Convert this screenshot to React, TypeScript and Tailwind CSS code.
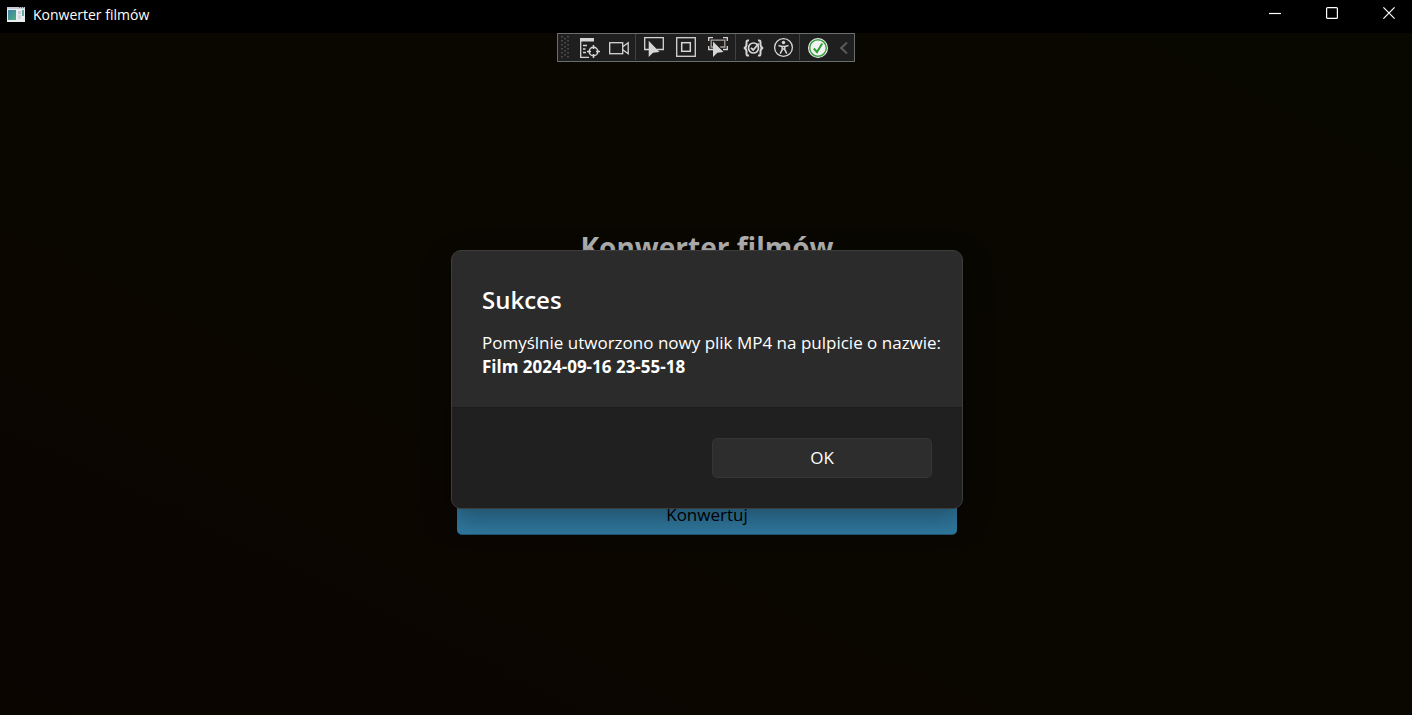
import type { ReactNode } from "react";

function AppIcon() {
  return (
    <svg viewBox="0 0 18 16" className="h-4 w-[18px]" aria-hidden="true">
      <defs>
        <linearGradient id="pane" x1="0" y1="0" x2="1" y2="1">
          <stop offset="0" stopColor="#3f7fae" />
          <stop offset="1" stopColor="#4fae7a" />
        </linearGradient>
      </defs>
      <rect width="18" height="15" fill="#e9edf0" />
      <rect width="18" height="2" fill="#c3cbd6" />
      <rect x="12" y="0" width="1" height="1" fill="#55607a" />
      <rect x="14" y="0" width="1" height="1" fill="#55607a" />
      <rect x="16" y="0" width="1" height="1" fill="#55607a" />
      <rect x="1" y="3" width="8" height="10" fill="url(#pane)" />
      <rect x="11" y="4" width="3" height="3" fill="#c9ced4" />
      <rect x="11" y="8" width="3" height="4" fill="#d4d8dc" />
      <rect x="15" y="3" width="2" height="6" fill="#6aa6a8" />
    </svg>
  );
}

function WindowButton({ label, children }: { label: string; children: ReactNode }) {
  return (
    <button type="button" aria-label={label} className="flex h-[26px] w-[57px] items-center justify-center">
      <svg viewBox="0 0 12 12" className="size-3" fill="none" stroke="#ffffff" strokeWidth="1.2">
        {children}
      </svg>
    </button>
  );
}

function Tool({ label, children }: { label: string; children: ReactNode }) {
  return (
    <button type="button" aria-label={label} className="size-5">
      <svg viewBox="0 0 20 20" className="size-5 overflow-visible" fill="none" stroke="#d6d6d6" strokeWidth="1.3">
        {children}
      </svg>
    </button>
  );
}

function Separator() {
  return <div className="h-[26px] w-px bg-[#424242]" />;
}

const gripRows = [0, 4, 8, 12, 16, 20];

function DebugToolbar() {
  return (
    <div role="toolbar" aria-label="Debug tools" className="flex h-[29px] items-center border border-[#686d6d] bg-[#1f1f1f] pb-px pl-[3px]">
      <svg viewBox="0 0 9 22" className="h-[22px] w-[9px]" fill="#484848" aria-hidden="true">
        {gripRows.map((y) => (
          <g key={y}>
            <rect x="0" y={y} width="2" height="1.5" />
            <rect x="6" y={y} width="2" height="1.5" />
            {y < 20 && <rect x="3" y={y + 2} width="2" height="1.5" />}
          </g>
        ))}
      </svg>
      <div className="flex gap-[9px] pr-[6px] pl-[10px]">
        <Tool label="Live visual tree">
          <rect x="0" y="1" width="14" height="3.500" fill="#d6d6d6" stroke="none" />
          <path d="M.7 4v16.300H9M3 8.500h4M3 12h2.500M3 15.500h3" />
          <circle cx="13.500" cy="14.500" r="4.300" strokeWidth="1.500" />
          <path d="M13.500 8v4M13.500 17v4M7 14.500h4M16 14.500h4" strokeWidth="1.500" />
        </Tool>
        <Tool label="Record">
          <rect x=".7" y="5.700" width="13" height="11" />
          <path d="M13.700 9.700l5.500-4v11l-5.500-4" />
        </Tool>
      </div>
      <Separator />
      <div className="flex gap-3 pr-[7px] pl-2">
        <Tool label="Select element">
          <path d="M5 12.500H.7V.7h18.600v11.800H12.500" />
          <path d="M4.700 3.800v16.200l4.300-4.200 6.500-.8z" fill="#d6d6d6" stroke="none" />
        </Tool>
        <Tool label="Display layout adorners">
          <rect x=".7" y=".7" width="18.600" height="18.600" />
          <rect x="5.700" y="5.700" width="8.600" height="8.600" strokeWidth="1.500" />
        </Tool>
        <Tool label="Track focused element">
          <path d="M.7 4V.7H5M15 .7h4.300V4M.7 9v3.500H5M15 12.500h4.300V9" />
          <path d="M5 10H3.200V3.200h13.600V10h-4.500" stroke="#aaa49c" />
          <path d="M5 4.500v15.500l4.300-4.200 6.200-.8z" fill="#d6d6d6" stroke="none" />
        </Tool>
      </div>
      <Separator />
      <div className="flex gap-[10px] pr-[6px] pl-[7px]">
        <Tool label="Binding failures">
          <path d="M6 3.500C3 3 3.500 5 3.500 7.500c0 2.200-.5 3-2.500 3.500 2 .5 2.500 1.300 2.500 3.500 0 2.500-.5 4.500 2.500 4M15 3.500c3-.5 2.500 1.500 2.500 4 0 2.200.5 3 2.500 3.500-2 .5-2.500 1.300-2.500 3.500 0 2.500.5 4.500-2.500 4" strokeWidth="2" />
          <circle cx="10.500" cy="11" r="5" strokeWidth="1.700" />
          <path d="M8 10.800l2.200 2.200L15.800 6.500" strokeWidth="1.800" />
        </Tool>
        <Tool label="Scan accessibility">
          <circle cx="10.500" cy="10.500" r="8.900" />
          <circle cx="10.500" cy="5.500" r="1.700" fill="#d6d6d6" stroke="none" />
          <path d="M5.500 8.500l3.500 1h3l3.500-1M9.200 9.500v3.200l-2 4M11.800 9.500v3.200l2 4M9 12h3" strokeWidth="1.500" />
        </Tool>
      </div>
      <Separator />
      <div className="flex items-center gap-3 pr-[6px] pl-2">
        <Tool label="Hot reload">
          <circle cx="10" cy="11" r="10" fill="#f2f4f2" stroke="none" />
          <circle cx="10" cy="11" r="8.300" stroke="#3f9f45" strokeWidth="1.500" />
          <path d="M5.800 11.500l3.200 3.500 5.200-8.500" stroke="#2f9a37" strokeWidth="2" />
        </Tool>
        <button type="button" aria-label="Collapse" className="w-2 pt-[2px]">
          <svg viewBox="0 0 8 12" className="h-3 w-2" fill="none" stroke="#5c5c5c" strokeWidth="1.900">
            <path d="M7 .5L1.200 6 7 11.500" />
          </svg>
        </button>
      </div>
    </div>
  );
}

export default function App() {
  return (
    <div className="flex min-h-screen flex-col bg-black font-['Open_Sans','Noto_Sans',sans-serif]">
      <header className="flex h-[33px] items-start justify-between pl-[7px] text-white">
        <div className="flex h-[30px] items-center gap-2">
          <AppIcon />
          <span className="text-sm">Konwerter filmów</span>
        </div>
        <div className="-mr-[5px] flex">
          <WindowButton label="Minimalizuj"><path d="M0 6.500h12" /></WindowButton>
          <WindowButton label="Maksymalizuj"><rect x=".6" y=".6" width="10.800" height="10.800" rx="1" /></WindowButton>
          <WindowButton label="Zamknij"><path d="M.4.4l11.200 11.200M11.600.4L.4 11.600" /></WindowButton>
        </div>
      </header>

      <div className="relative flex grow flex-col items-center justify-center bg-linear-to-tr from-[#0b0500] via-[#0a0700] to-[#080700] pt-3 pl-[2px]">
        <main className="flex h-[310px] w-[500px] max-w-full flex-col justify-between">
          <h1 className="text-center text-[28px] leading-[44px] font-bold text-[#b0b0b0]">Konwerter filmów</h1>
          <button type="button" className="h-10 rounded-[5px] border-b border-[#205572] bg-[#3079a0] text-[17px] text-black">
            Konwertuj
          </button>
        </main>

        <div className="absolute inset-x-0 top-0 flex justify-center">
          <DebugToolbar />
        </div>

        <div className="absolute inset-0 flex items-center justify-center pt-[10px] pl-[2px]">
          <section
            role="dialog"
            aria-modal="true"
            aria-labelledby="dialog-title"
            className="w-[512px] max-w-full overflow-hidden rounded-[10px] border border-[#3d3d3b] bg-[#2b2b2b] text-white shadow-[0_10px_28px_rgba(0,0,0,0.35)]"
          >
            <div className="px-[30px] pt-[30px] pb-7">
              <h2 id="dialog-title" className="text-2xl leading-[38px] font-semibold">Sukces</h2>
              <p className="mt-3 text-[17px] leading-6 whitespace-nowrap">
                Pomyślnie utworzono nowy plik MP4 na pulpicie o nazwie:
                <br />
                <strong className="font-bold">Film 2024-09-16 23-55-18</strong>
              </p>
            </div>
            <div className="flex justify-end border-t border-[#1c1c1c] bg-[#202020] px-[30px] py-[30px]">
              <button type="button" className="h-10 w-[220px] rounded-[5px] border border-[#353535] bg-[#2d2d2d] text-[17px]">
                OK
              </button>
            </div>
          </section>
        </div>
      </div>
    </div>
  );
}
